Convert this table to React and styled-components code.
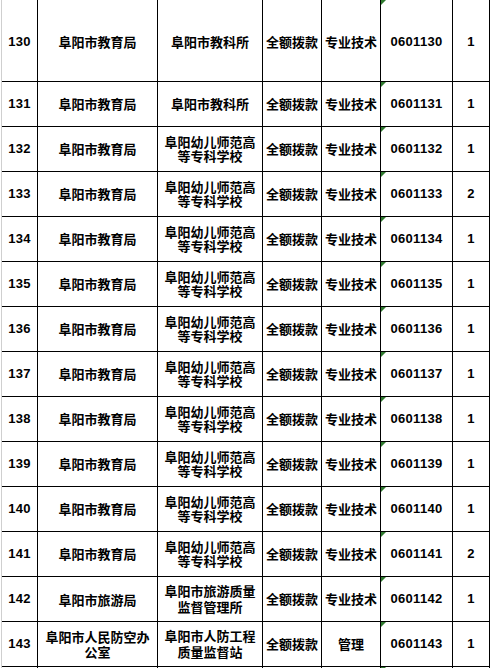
import React from "react";
import styled, { createGlobalStyle } from "styled-components";

const Global = createGlobalStyle`
  html, body { margin: 0; padding: 0; background: #fff; }
  body { width: 491px; height: 668px; overflow: hidden; }
`;

const Sheet = styled.div`
  margin-left: 1px;
  width: 489px;
  border-left: 1px solid #cfcfcf;
  display: grid;
  grid-template-columns: 36px 120px 105px 59px 59px 72px 37px;
  color: #000;
`;

const Cell = styled.div`
  position: relative;
  box-sizing: border-box;
  height: ${(p) => p.$h}px;
  padding-top: ${(p) => p.$pt || 0}px;
  border-right: 1px solid #000;
  border-bottom: 1px solid #000;
  display: flex;
  flex-direction: column;
  align-items: center;
  justify-content: center;
  text-align: center;
  white-space: nowrap;
  overflow: hidden;
  font-family: ${(p) =>
    p.$num
      ? '"Liberation Sans", Arial, sans-serif'
      : '"Noto Sans CJK SC", "Noto Sans", sans-serif'};
  font-weight: 700;
  font-size: 13px;
  line-height: ${(p) => p.$lh || 14}px;
  letter-spacing: ${(p) => (p.$num ? "0.3px" : "0")};
`;

const Marker = styled.span`
  position: absolute;
  left: 0;
  top: 0;
  width: 0;
  height: 0;
  border-top: 5px solid #2f7a2f;
  border-right: 5px solid transparent;
`;

const rows = [
  ["130", ["阜阳市教育局"], ["阜阳市教科所"], "全额拨款", "专业技术", "0601130", "1"],
  ["131", ["阜阳市教育局"], ["阜阳市教科所"], "全额拨款", "专业技术", "0601131", "1"],
  ["132", ["阜阳市教育局"], ["阜阳幼儿师范高", "等专科学校"], "全额拨款", "专业技术", "0601132", "1"],
  ["133", ["阜阳市教育局"], ["阜阳幼儿师范高", "等专科学校"], "全额拨款", "专业技术", "0601133", "2"],
  ["134", ["阜阳市教育局"], ["阜阳幼儿师范高", "等专科学校"], "全额拨款", "专业技术", "0601134", "1"],
  ["135", ["阜阳市教育局"], ["阜阳幼儿师范高", "等专科学校"], "全额拨款", "专业技术", "0601135", "1"],
  ["136", ["阜阳市教育局"], ["阜阳幼儿师范高", "等专科学校"], "全额拨款", "专业技术", "0601136", "1"],
  ["137", ["阜阳市教育局"], ["阜阳幼儿师范高", "等专科学校"], "全额拨款", "专业技术", "0601137", "1"],
  ["138", ["阜阳市教育局"], ["阜阳幼儿师范高", "等专科学校"], "全额拨款", "专业技术", "0601138", "1"],
  ["139", ["阜阳市教育局"], ["阜阳幼儿师范高", "等专科学校"], "全额拨款", "专业技术", "0601139", "1"],
  ["140", ["阜阳市教育局"], ["阜阳幼儿师范高", "等专科学校"], "全额拨款", "专业技术", "0601140", "1"],
  ["141", ["阜阳市教育局"], ["阜阳幼儿师范高", "等专科学校"], "全额拨款", "专业技术", "0601141", "2"],
  ["142", ["阜阳市旅游局"], ["阜阳市旅游质量", "监督管理所"], "全额拨款", "专业技术", "0601142", "1", 16],
  ["143", ["阜阳市人民防空办", "公室"], ["阜阳市人防工程", "质量监督站"], "全额拨款", "管理", "0601143", "1", 16],
  ["", [""], [""], "", "", "", ""],
];

const Lines = ({ lines }) =>
  lines.map((l, i) => <span key={i}>{l}</span>);

export default function App() {
  return (
    <>
      <Global />
      <Sheet>
        {rows.map((r, i) => {
          const h = i === 0 ? 82 : 45;
          const pt = i === 0 ? 3 : 0;
          const lh = r[7] || 14;
          return (
            <React.Fragment key={i}>
              <Cell $h={h} $pt={pt} $num>{r[0]}</Cell>
              <Cell $h={h} $pt={pt} $lh={lh === 16 ? 15 : lh}><Lines lines={r[1]} /></Cell>
              <Cell $h={h} $pt={pt} $lh={lh}><Lines lines={r[2]} /></Cell>
              <Cell $h={h} $pt={pt}>{r[3]}</Cell>
              <Cell $h={h} $pt={pt}>{r[4]}</Cell>
              <Cell $h={h} $pt={pt} $num>
                <Marker />
                {r[5]}
              </Cell>
              <Cell $h={h} $pt={pt} $num>{r[6]}</Cell>
            </React.Fragment>
          );
        })}
      </Sheet>
    </>
  );
}
